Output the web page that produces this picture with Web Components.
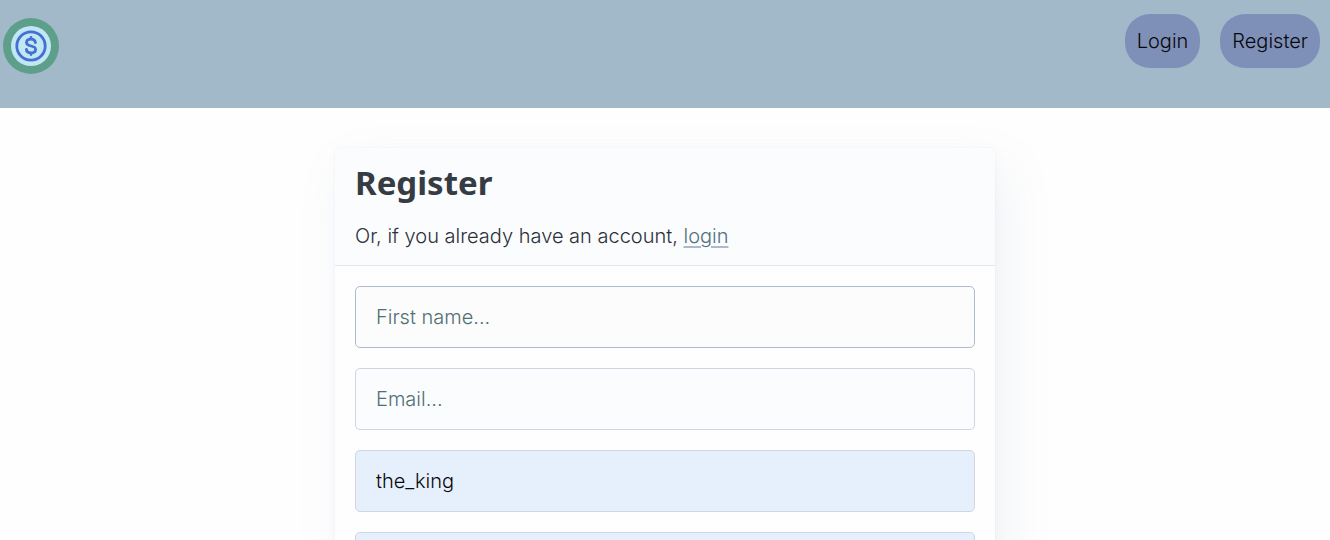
<!DOCTYPE html>
<html lang="en">
<head>
<meta charset="utf-8">
<meta name="viewport" content="width=device-width, initial-scale=1">
<title>Register</title>
<style>
html, body { margin: 0; height: 100%; }
body { background: #fefefe; color: #2c3038; font: 300 20px/30px Inter, "Liberation Sans", sans-serif; overflow: hidden; }
</style>
</head>
<body>
<app-shell>
  <site-header slot="header">
    <coin-logo slot="brand"></coin-logo>
    <nav-pill href="#login">Login</nav-pill>
    <nav-pill href="#register">Register</nav-pill>
  </site-header>
  <form-card heading="Register">
    <span slot="intro">Or, if you already have an account, <text-link href="#login">login</text-link></span>
    <text-field class="active" label="First name" name="name" placeholder="First name..."></text-field>
    <text-field label="Email" name="email" type="email" placeholder="Email..."></text-field>
    <text-field class="filled" label="Username" name="username" value="the_king"></text-field>
    <text-field class="filled" label="Password" name="password" type="password"></text-field>
  </form-card>
</app-shell>

<script>
function define(name, html, setup) {
  const template = document.createElement('template');
  template.innerHTML = html;
  customElements.define(name, class extends HTMLElement {
    constructor() {
      super();
      this.attachShadow({ mode: 'open' }).append(template.content.cloneNode(true));
    }
    connectedCallback() {
      if (setup) setup(this, this.shadowRoot);
    }
  });
}

define('app-shell', `
<style>
:host { display: flex; flex-direction: column; height: 100%; overflow-y: auto; scrollbar-width: none; }
main { padding: 40px 20px; }
</style>
<slot name="header"></slot>
<main><slot></slot></main>`);

define('site-header', `
<style>
:host { display: block; background: #a2b9c9; }
header { display: flex; justify-content: space-between; align-items: flex-start; padding: 14px 10px 40px 3px; }
.brand { padding-top: 4px; height: 50px; }
nav { display: flex; gap: 20px; }
</style>
<header><div class="brand"><slot name="brand"></slot></div><nav aria-label="Main"><slot></slot></nav></header>`);

define('coin-logo', `
<style>
:host { display: block; width: 56px; height: 56px; }
svg { display: block; }
</style>
<svg width="56" height="56" viewBox="0 0 56 56" role="img" aria-label="Home">
  <circle cx="28" cy="28" r="28" fill="#5e9f8b"/>
  <circle cx="28" cy="28" r="20" fill="#c1e6f4"/>
  <g fill="none" stroke="#456fd1" stroke-linecap="round" stroke-linejoin="round">
    <circle cx="28" cy="28" r="14.2" stroke-width="2.8"/>
    <path stroke-width="2.8" d="M32.4 24.6C32.2 22.3 30.4 21.2 28 21.2C25.3 21.2 23.5 22.5 23.5 24.6C23.5 26.9 25.6 27.5 28 28C30.6 28.5 32.6 29.2 32.6 31.4C32.6 33.6 30.8 34.8 28 34.8C25.2 34.8 23.5 33.6 23.4 31.4M28 19.4V21M28 35V36.6"/>
  </g>
</svg>`);

define('nav-pill', `
<style>
:host { display: block; }
a { display: block; padding: 12px; border-radius: 25px; background: #7f90b8; color: #08080c; text-decoration: none; }
</style>
<a><slot></slot></a>`, (el, root) => { root.querySelector('a').href = el.getAttribute('href'); });

define('text-link', `
<style>
:host { display: inline; }
a { color: #527080; text-decoration: underline; text-decoration-color: #afb8cb; text-decoration-thickness: 2px; text-underline-offset: 3px; }
</style>
<a><slot></slot></a>`, (el, root) => { root.querySelector('a').href = el.getAttribute('href'); });

define('form-card', `
<style>
:host { display: block; max-width: 660px; margin: 0 auto; }
article { border-radius: 5px; background: #fefefe; box-shadow: 10px 20px 50px rgba(129,145,181,.10), 1px 2px 10px rgba(129,145,181,.06), 0 0 0 1px rgba(129,145,181,.03); }
header { padding: 15px 20px 14px; border-bottom: 1px solid #e3e6ef; border-radius: 5px 5px 0 0; background: #fbfcfe; }
h1 { margin: 0 0 18px; font: 700 33px/40px "Noto Sans", "Open Sans", sans-serif; color: #373c44; }
p { margin: 0; }
form { display: grid; gap: 20px; padding: 20px; }
</style>
<article>
  <header><h1></h1><p><slot name="intro"></slot></p></header>
  <form><slot></slot></form>
</article>`, (el, root) => { root.querySelector('h1').textContent = el.getAttribute('heading'); });

define('text-field', `
<style>
:host { display: block; --edge: #cfd5e2; --fill: #fbfcfe; }
:host(.active) { --edge: #aebbcd; --fill: #fcfcfc; }
:host(.filled) { --fill: #e6f0fd; }
label { display: block; }
input { display: block; box-sizing: border-box; width: 100%; margin: 0; padding: 15px 20px; border: 1px solid var(--edge); border-radius: 5px; background: var(--fill); color: #08080c; font: inherit; height: 62px; outline: none; }
input:focus { border-color: #8191b5; }
input::placeholder { color: #507074; opacity: 1; }
</style>
<label><input></label>`, (el, root) => {
  const input = root.querySelector('input');
  for (const key of ['name', 'type', 'placeholder', 'value']) {
    if (el.hasAttribute(key)) input.setAttribute(key, el.getAttribute(key));
  }
  input.setAttribute('aria-label', el.getAttribute('label'));
});
</script>
</body>
</html>
